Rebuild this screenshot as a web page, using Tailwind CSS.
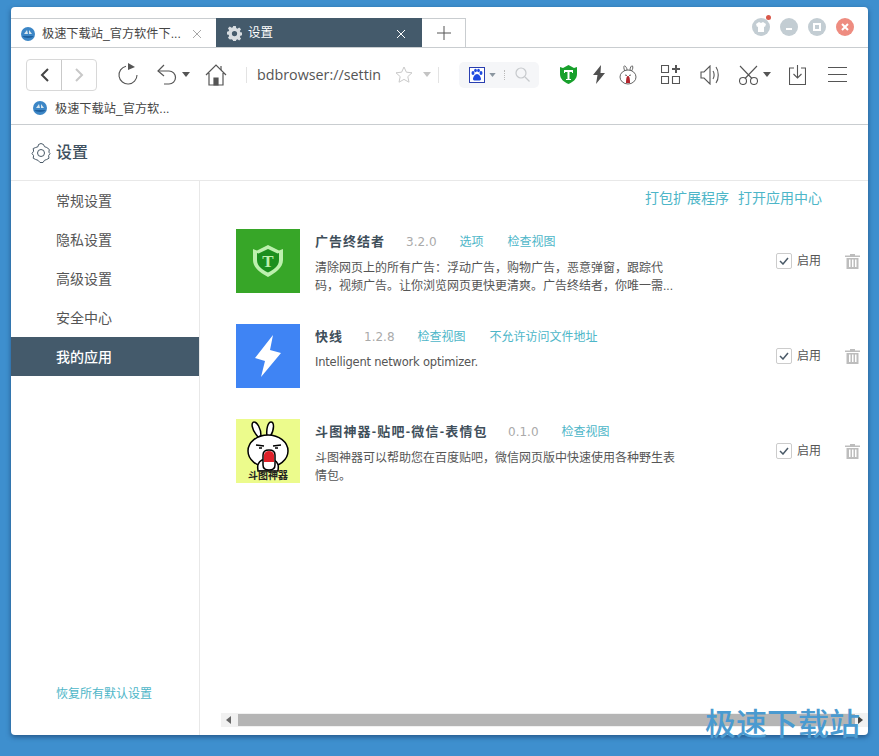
<!DOCTYPE html>
<html lang="zh-CN">
<head>
    <meta charset="UTF-8">
    <meta name="viewport" content="width=device-width, initial-scale=1.0">
    <title>设置</title>
    <script src="https://cdn.jsdelivr.net/npm/@tailwindcss/browser@4"></script>
</head>
<body class="bg-[#3e8fce] h-[756px] w-[879px] overflow-hidden pt-[7px] pl-[11px] font-['Liberation_Sans','Noto_Sans_CJK_SC',sans-serif] text-[#555]">
    <div class="relative w-[857px] h-[728px] bg-white rounded-[4px] shadow-[0_2px_5px_rgba(20,50,90,0.6)] flex flex-col">

        <!-- tabs -->
        <div class="h-[40px] shrink-0 flex items-end border-b border-[#c9cdd0] box-content">
            <div class="w-[205px] h-[29px] border-t border-[#c9cdd0] flex items-center pl-[10px] pt-[2px] text-[12.2px] text-[#444]">
                <svg class="w-[14px] h-[14px]" viewBox="0 0 14 14"><circle cx="7" cy="7" r="7" fill="#3c86c6"/><path d="M1 9a7 4 0 0 0 12 0z" fill="#1d5f9e"/><path d="M3 7l3-4 1 4zM8 3l3 4H8z" fill="#d8e6ee"/></svg>
                <span class="ml-[7px] whitespace-nowrap">极速下载站_官方软件下...</span>
                <svg class="w-[10px] h-[10px] ml-[11px]" viewBox="0 0 10 10" fill="none" stroke="#a8a8a8"><path d="M1 1l8 8M9 1l-8 8"/></svg>
            </div>
            <div class="w-[206px] h-[29px] bg-[#445a6b] flex items-center pl-[11px] pt-[2px] text-[12.5px] text-white">
                <svg class="w-[15px] h-[15px]" viewBox="0 0 16 16"><path fill="#d8dde1" fill-rule="evenodd" d="M6.6 0h2.8l.4 2.2 1.3.6L13 1.5l2 2-1.3 1.9.6 1.3 2.2.4v2.8l-2.2.4-.6 1.3 1.3 1.9-2 2-1.9-1.3-1.3.6-.4 2.2H6.6l-.4-2.2-1.3-.6L3 14.5l-2-2 1.3-1.9-.6-1.3L-.5 8.9V6.1l2.2-.4.6-1.3L1 2.5l2-2 1.9 1.3 1.3-.6zM8 5.2a2.8 2.8 0 1 0 0 5.6 2.8 2.8 0 0 0 0-5.6z"/></svg>
                <span class="ml-[6px]">设置</span>
                <svg class="w-[10px] h-[10px] ml-[123px]" viewBox="0 0 10 10" fill="none" stroke="#fff"><path d="M1 1l8 8M9 1l-8 8"/></svg>
            </div>
            <div class="w-[44px] h-[29px] border-t border-r border-[#c9cdd0] flex items-center justify-center">
                <svg class="w-[14px] h-[14px]" viewBox="0 0 14 14" fill="none" stroke="#555"><path d="M7 0v14M0 7h14"/></svg>
            </div>
            <!-- window buttons -->
            <div class="ml-auto flex gap-[10px] self-start mt-[11px] mr-[14px]">
                <div class="relative w-[18px] h-[18px] rounded-full bg-[#c3cdd3] flex items-center justify-center">
                    <svg class="w-[10px] h-[10px]" viewBox="0 0 10 10"><path fill="#fff" d="M3 0l2 1 2-1 3 2-1 3-1-.5V10H2V4.500L1 5 0 2z"/></svg>
                    <span class="absolute -top-[3px] right-[-1px] w-[5px] h-[5px] rounded-full bg-[#d9584a]"></span>
                </div>
                <div class="w-[18px] h-[18px] rounded-full bg-[#c3cdd3] flex items-center justify-center"><span class="block w-[6px] h-[2px] bg-white mt-[3px]"></span></div>
                <div class="w-[18px] h-[18px] rounded-full bg-[#c3cdd3] flex items-center justify-center"><span class="block w-[8px] h-[8px] border-2 border-white"></span></div>
                <div class="w-[18px] h-[18px] rounded-full bg-[#ee8c80] flex items-center justify-center">
                    <svg class="w-[8px] h-[8px]" viewBox="0 0 8 8" fill="none" stroke="#fff" stroke-width="2"><path d="M1 1l6 6M7 1L1 7"/></svg>
                </div>
            </div>
        </div>

        <!-- toolbar -->
        <div class="h-[47px] shrink-0 flex items-center pl-[15px] pt-[6px]">
            <div class="w-[71px] h-[32px] border border-[#d8d8d8] rounded-[4px] flex shrink-0">
                <div class="w-[35px] border-r border-[#c9c9c9] flex items-center justify-center">
                    <svg class="w-[9px] h-[14px]" viewBox="0 0 9 14" fill="none" stroke="#444" stroke-width="2"><path d="M8 1L2 7l6 6"/></svg>
                </div>
                <div class="flex-1 flex items-center justify-center">
                    <svg class="w-[9px] h-[14px]" viewBox="0 0 9 14" fill="none" stroke="#c8c8c8" stroke-width="2"><path d="M1 1l6 6-6 6"/></svg>
                </div>
            </div>
            <svg class="w-[20px] h-[24px] ml-[21px] shrink-0" viewBox="0 0 20 24" fill="none" stroke="#555" stroke-width="1.100"><path d="M8 3.200A9 9 0 1 0 19 12"/><path d="M10 0l7 4-7 3z" fill="#555" stroke="none"/></svg>
            <svg class="w-[20px] h-[22px] ml-[19px] shrink-0" viewBox="0 0 20 22" fill="none" stroke="#555" stroke-width="1.200"><path d="M7 1L1 7l6 5"/><path d="M1 7h11a6.500 6.500 0 0 1 0 13H7"/></svg>
            <svg class="w-[8px] h-[5px] ml-[5px] shrink-0" viewBox="0 0 8 5"><path d="M0 0h8L4 5z" fill="#555"/></svg>
            <svg class="w-[22px] h-[22px] ml-[15px] shrink-0" viewBox="0 0 22 22" fill="none" stroke="#555" stroke-width="1.200"><path d="M1 11L11 1l10 10M4 9v12h14V9"/><path d="M9 21v-7h4v7z" fill="#555"/><path d="M16 2v4"/></svg>
            <span class="ml-[19px] w-px h-[16px] bg-[#e3e3e3] shrink-0"></span>
            <div class="ml-[10px] w-[123px] shrink-0 whitespace-nowrap text-[14.3px] text-[#555] font-['Open_Sans','Noto_Sans_CJK_SC',sans-serif]">bdbrowser://settin</div>
            <svg class="w-[18px] h-[17px] ml-[15px] shrink-0" viewBox="0 0 18 17" fill="none" stroke="#c9c9c9"><path d="M9 1l2.400 5.200 5.600.6-4.200 3.800 1.200 5.600L9 13.400 4 16.200l1.200-5.600L1 6.800l5.600-.6z"/></svg>
            <svg class="w-[8px] h-[5px] ml-[10px] shrink-0" viewBox="0 0 8 5"><path d="M0 0h8L4 5z" fill="#c4c4c4"/></svg>
            <span class="ml-[7px] w-px h-[16px] bg-[#e3e3e3] shrink-0"></span>
            <div class="ml-[20px] w-[80px] h-[26px] bg-[#f5f6f8] rounded-[5px] shrink-0 flex items-center pl-[10px]">
                <svg class="w-[16px] h-[16px] shrink-0" viewBox="0 0 16 16"><rect x=".5" y=".5" width="15" height="15" fill="#fff" stroke="#2a3fb0"/><g fill="#1f4be0"><ellipse cx="4" cy="6" rx="1.500" ry="2"/><ellipse cx="6.500" cy="3.500" rx="1.400" ry="1.800"/><ellipse cx="9.500" cy="3.500" rx="1.400" ry="1.800"/><ellipse cx="12" cy="6" rx="1.500" ry="2"/><path d="M8 7c2 0 4 3 4 5 0 2-2 1.500-4 1.500S4 14 4 12c0-2 2-5 4-5z"/></g></svg>
                <svg class="w-[7px] h-[4px] ml-[4px] shrink-0" viewBox="0 0 8 5"><path d="M0 0h8L4 5z" fill="#8b96a0"/></svg>
                <span class="ml-[8px] h-[10px] border-l border-dotted border-[#bbb]"></span>
                <svg class="w-[15px] h-[15px] ml-[10px] shrink-0" viewBox="0 0 15 15" fill="none" stroke="#c6c9cc" stroke-width="1.200"><circle cx="6" cy="6" r="5"/><path d="M10 10l4.500 4.500"/></svg>
            </div>
            <svg class="w-[17px] h-[19px] ml-[21px] shrink-0" viewBox="0 0 17 19"><path d="M0 2l3 1 5.500-3L14 3l3-1v7c0 5-4 8-8.500 10C4 17 0 14 0 9z" fill="#18a02c"/><path d="M4 5h9v3h-1V7H9.500v7H11v1H6v-1h1.500V7H5v1H4z" fill="#fff"/></svg>
            <svg class="w-[12px] h-[19px] ml-[16px] shrink-0" viewBox="0 0 12 19"><path d="M8 0L0 10h4.500L3 19l9-11H7.500z" fill="#505050"/></svg>
            <svg class="w-[18px] h-[20px] ml-[14px] shrink-0" viewBox="0 0 18 20" fill="none" stroke="#555" stroke-width=".9"><path d="M6 6C4 3 5 0 6 1s2 2 2 4M11 5c0-3 2-5 2.500-4S14 4 12.500 6"/><ellipse cx="9" cy="12" rx="8" ry="7"/><path d="M6 10l2 .5M12 10l-2 .5"/><path d="M7 18c0-6 1-7 2-7s2 1 2 7z" fill="#b3242c" stroke="none"/></svg>
            <svg class="w-[19px] h-[19px] ml-[24px] shrink-0" viewBox="0 0 19 19" fill="none" stroke="#555" stroke-width="1.100"><path d="M.5.500h7v7h-7zM.5 11.500h7v7h-7zM11.500 11.500h7v7h-7z"/><path d="M15 0v8M11 4h8" stroke-width="2"/></svg>
            <svg class="w-[20px] h-[20px] ml-[20px] shrink-0" viewBox="0 0 20 20" fill="none" stroke="#555" stroke-width="1.100"><path d="M1 7v6h3l6 6V1L4 7z"/><path d="M13 6c1.500 2 1.500 6 0 8M16 2c3 4 3 12 0 16"/></svg>
            <svg class="w-[19px] h-[20px] ml-[19px] shrink-0" viewBox="0 0 19 20" fill="none" stroke="#555" stroke-width="1.100"><circle cx="4" cy="16" r="3.500"/><circle cx="15" cy="16" r="3.500"/><path d="M6 13.500L18 1M13 13.500L1 1"/></svg>
            <svg class="w-[8px] h-[5px] ml-[5px] shrink-0" viewBox="0 0 8 5"><path d="M0 0h8L4 5z" fill="#555"/></svg>
            <svg class="w-[17px] h-[20px] ml-[18px] shrink-0" viewBox="0 0 17 20" fill="none" stroke="#555" stroke-width="1.100"><path d="M5 3H.5v16.500h16V3H12"/><path d="M8.500 0v13M4.500 9l4 4 4-4"/></svg>
            <svg class="w-[19px] h-[15px] ml-[22px] shrink-0" viewBox="0 0 19 15" fill="none" stroke="#555" stroke-width="1.100"><path d="M0 .5h19M0 7.500h19M0 14.500h19"/></svg>
        </div>

        <!-- bookmarks -->
        <div class="h-[30px] shrink-0 border-b border-[#c9cdd0] flex items-start pt-[5px] pl-[22px] text-[12.2px] text-[#444]">
            <svg class="w-[14px] h-[14px] mt-[1px]" viewBox="0 0 14 14"><circle cx="7" cy="7" r="7" fill="#3c86c6"/><path d="M1 9a7 4 0 0 0 12 0z" fill="#1d5f9e"/><path d="M3 7l3-4 1 4zM8 3l3 4H8z" fill="#d8e6ee"/></svg>
            <span class="ml-[8px]">极速下载站_官方软...</span>
        </div>

        <!-- page header -->
        <div class="h-[56px] shrink-0 border-b border-[#e8e8e8] flex items-center pl-[20px]">
            <svg class="w-[20px] h-[20px]" viewBox="0 0 20 20" fill="none" stroke="#4a5a68" stroke-width="1"><path d="M7.500 1.500l2.500-1 2.500 1 1 2.200 2.300.8 2.500 2-.4 2.700L19 10.500l-1.400 2.200.4 2.500-2.300 1.300-2.200.8-1.500 2.200h-3L7 17.300l-2.300-.8-2.500-1.300.4-2.500L1 10.500l1.600-2.300-.4-2.700 2.500-1 2.300-.8z"/><circle cx="10" cy="10" r="3.500"/></svg>
            <span class="ml-[5px] text-[16px] font-medium text-[#3f5160]">设置</span>
        </div>

        <div class="flex-1 flex min-h-0">
            <!-- sidebar -->
            <div class="w-[189px] shrink-0 border-r border-[#e8e8e8] flex flex-col text-[14px] text-[#555]">
                <div class="h-[39px] flex items-center pl-[45px] pt-[2px]">常规设置</div>
                <div class="h-[39px] flex items-center pl-[45px] pt-[2px]">隐私设置</div>
                <div class="h-[39px] flex items-center pl-[45px] pt-[2px]">高级设置</div>
                <div class="h-[39px] flex items-center pl-[45px] pt-[2px]">安全中心</div>
                <div class="h-[39px] flex items-center pl-[45px] pt-[2px] bg-[#445a6b] text-white font-medium">我的应用</div>
                <div class="mt-auto mb-[32px] pl-[45px] text-[12px] text-[#4db6c8]">恢复所有默认设置</div>
            </div>

            <!-- apps -->
            <div class="flex-1 flex flex-col min-w-0">
                <div class="flex-1 pl-[36px]">
                    <div class="h-[34px] flex justify-end items-center gap-[9px] pr-[46px] pt-[1px] text-[14px] text-[#4db6c8] whitespace-nowrap">
                        <span>打包扩展程序</span><span>打开应用中心</span>
                    </div>

                    <div class="mt-[14px] h-[64px] flex">
                        <div class="w-[64px] h-[64px] bg-[#37a628] shrink-0 flex items-center justify-center">
                            <svg class="w-[32px] h-[32px]" viewBox="0 0 32 32"><path d="M1 4l4 1.500L16 0l11 5.500L31 4v11c0 8-8 13-15 17C9 28 1 23 1 15z" fill="#bdf0ae"/><path d="M5 8l1.500.5L16 4l9.500 4.500L27 8v7c0 6-5.500 10-11 12.500C10.500 25 5 21 5 15z" fill="#1b8f1e"/><text x="16" y="22" font-size="17" font-weight="bold" text-anchor="middle" fill="#bdf0ae" font-family="Liberation Serif">T</text></svg>
                        </div>
                        <div class="ml-[15px] w-[360px] shrink-0">
                            <div class="flex items-center h-[26px] whitespace-nowrap text-[12px]">
                                <span class="text-[13px] leading-[14px] font-bold text-[#3f4f5b] w-[70px] tracking-[1px]">广告终结者</span>
                                <span class="ml-[21px] text-[#aaa] font-['DejaVu_Sans',sans-serif] text-[12px]">3.2.0</span>
                                <span class="ml-[23px] text-[#4db6c8]">选项</span>
                                <span class="ml-[24px] text-[#4db6c8]">检查视图</span>
                            </div>
                            <p class="mt-[4px] text-[12px] leading-[18px] whitespace-nowrap">清除网页上的所有广告：浮动广告，购物广告，恶意弹窗，跟踪代<br>码，视频广告。让你浏览网页更快更清爽。广告终结者，你唯一需...</p>
                        </div>
                        <div class="ml-[101px] shrink-0 flex items-center self-start mt-[24px] h-[16px]">
                            <span class="w-[16px] h-[16px] border border-[#ccc] rounded-[2px] flex items-center justify-center"><svg class="w-[10px] h-[8px]" viewBox="0 0 10 8" fill="none" stroke="#4a5a68" stroke-width="1.500"><path d="M1 4l3 3 5-6"/></svg></span>
                            <span class="ml-[5px] text-[12px] whitespace-nowrap">启用</span>
                            <svg class="w-[15px] h-[15px] ml-[24px] shrink-0" viewBox="0 0 15 15" fill="#bdbdbd"><path d="M5 0h5v1.500h5V3H0V1.500h5zM1.500 4h12v11h-12zM4 5.500V13h1.500V5.500zm3 0V13h1.500V5.500zm3 0V13h1.500V5.500z" fill-rule="evenodd"/></svg>
                        </div>
                    </div>

                    <div class="mt-[31px] h-[64px] flex">
                        <div class="w-[64px] h-[64px] bg-[#3f84f4] shrink-0 flex items-center justify-center">
                            <svg class="w-[26px] h-[42px]" viewBox="0 0 26 42"><path d="M18 0L0 23l10 3-4 16 20-24-11-3z" fill="#fff"/></svg>
                        </div>
                        <div class="ml-[15px] w-[360px] shrink-0">
                            <div class="flex items-center h-[26px] whitespace-nowrap text-[12px]">
                                <span class="text-[13px] leading-[14px] font-bold text-[#3f4f5b] w-[28px] tracking-[1px]">快线</span>
                                <span class="ml-[21px] text-[#aaa] font-['DejaVu_Sans',sans-serif] text-[12px]">1.2.8</span>
                                <span class="ml-[23px] text-[#4db6c8]">检查视图</span>
                                <span class="ml-[24px] text-[#4db6c8]">不允许访问文件地址</span>
                            </div>
                            <p class="mt-[3px] text-[11.5px] leading-[18px] whitespace-nowrap font-['DejaVu_Sans',sans-serif] tracking-[-0.2px]">Intelligent network optimizer.</p>
                        </div>
                        <div class="ml-[101px] shrink-0 flex items-center self-start mt-[24px] h-[16px]">
                            <span class="w-[16px] h-[16px] border border-[#ccc] rounded-[2px] flex items-center justify-center"><svg class="w-[10px] h-[8px]" viewBox="0 0 10 8" fill="none" stroke="#4a5a68" stroke-width="1.500"><path d="M1 4l3 3 5-6"/></svg></span>
                            <span class="ml-[5px] text-[12px] whitespace-nowrap">启用</span>
                            <svg class="w-[15px] h-[15px] ml-[24px] shrink-0" viewBox="0 0 15 15" fill="#bdbdbd"><path d="M5 0h5v1.500h5V3H0V1.500h5zM1.500 4h12v11h-12zM4 5.500V13h1.500V5.500zm3 0V13h1.500V5.500zm3 0V13h1.500V5.500z" fill-rule="evenodd"/></svg>
                        </div>
                    </div>

                    <div class="mt-[31px] h-[64px] flex">
                        <div class="relative w-[64px] h-[64px] bg-[#ecfb8c] shrink-0 overflow-hidden">
                            <svg class="w-[64px] h-[64px]" viewBox="0 0 64 64"><g fill="#fff" stroke="#000" stroke-width="1.500"><path d="M22 18C15 10 15 3 18 3s7 6 7 14zM31 17c-1-7 1-14 4-14s4 7-1 15"/><ellipse cx="32" cy="32" rx="20" ry="16"/><path d="M22 52c-1-5 0-9 4-11h12c4 2 5 6 4 11z"/></g><path d="M27 36c0-3 2-5 6-5s6 2 6 5v10c0 3-2 5-6 5s-6-2-6-5z" fill="#fff" stroke="#000" stroke-width="1.500"/><path d="M28 43v-7c0-2 2-4 5-4s5 2 5 4v7z" fill="#e0212a"/><path d="M20 26l8 1M37 27l8-1M23 29h3M39 29h3" stroke="#000" stroke-width="1.300"/></svg>
                            <span class="absolute left-[12px] top-[51px] text-[10px] leading-[12px] font-bold text-[#222] whitespace-nowrap">斗图神器</span>
                        </div>
                        <div class="ml-[15px] w-[360px] shrink-0">
                            <div class="flex items-center h-[26px] whitespace-nowrap text-[12px]">
                                <span class="text-[13px] leading-[14px] font-bold text-[#3f4f5b] w-[172px] tracking-[1.2px]">斗图神器-贴吧-微信-表情包</span>
                                <span class="ml-[21px] text-[#aaa] font-['DejaVu_Sans',sans-serif] text-[12px]">0.1.0</span>
                                <span class="ml-[23px] text-[#4db6c8]">检查视图</span>
                            </div>
                            <p class="mt-[4px] text-[12px] leading-[18px] whitespace-nowrap">斗图神器可以帮助您在百度贴吧，微信网页版中快速使用各种野生表<br>情包。</p>
                        </div>
                        <div class="ml-[101px] shrink-0 flex items-center self-start mt-[24px] h-[16px]">
                            <span class="w-[16px] h-[16px] border border-[#ccc] rounded-[2px] flex items-center justify-center"><svg class="w-[10px] h-[8px]" viewBox="0 0 10 8" fill="none" stroke="#4a5a68" stroke-width="1.500"><path d="M1 4l3 3 5-6"/></svg></span>
                            <span class="ml-[5px] text-[12px] whitespace-nowrap">启用</span>
                            <svg class="w-[15px] h-[15px] ml-[24px] shrink-0" viewBox="0 0 15 15" fill="#bdbdbd"><path d="M5 0h5v1.500h5V3H0V1.500h5zM1.500 4h12v11h-12zM4 5.500V13h1.500V5.500zm3 0V13h1.500V5.500zm3 0V13h1.500V5.500z" fill-rule="evenodd"/></svg>
                        </div>
                    </div>
                </div>

                <!-- scrollbar -->
                <div class="ml-[21px] mb-[8px] h-[14px] bg-[#f1f1f1] flex items-center shrink-0">
                    <svg class="w-[5px] h-[8px] ml-[5px] shrink-0" viewBox="0 0 5 8"><path d="M5 0v8L0 4z" fill="#666"/></svg>
                    <div class="ml-[7px] w-[617px] h-[12px] bg-[#b5b5b5] shrink-0"></div>
                    <svg class="w-[5px] h-[8px] ml-[3px] shrink-0" viewBox="0 0 5 8"><path d="M0 0v8l5-4z" fill="#444"/></svg>
                </div>
            </div>
        </div>

        <!-- site watermark -->
        <div class="absolute left-[694px] top-[700px] text-[31px] leading-[36px] font-medium text-[#4a9ad0] whitespace-nowrap">极速下载站</div>
    </div>
</body>
</html>
